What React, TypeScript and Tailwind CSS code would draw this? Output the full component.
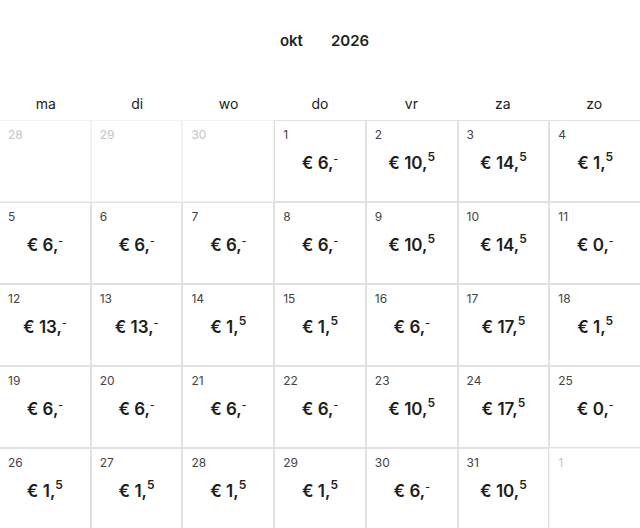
type Day = {
  day: number;
  euro?: number;
  cents?: string;
  muted?: boolean;
};

const weekdays = ['ma', 'di', 'wo', 'do', 'vr', 'za', 'zo'];

const days: Day[] = [
  { day: 28, muted: true },
  { day: 29, muted: true },
  { day: 30, muted: true },
  { day: 1, euro: 6, cents: '-' },
  { day: 2, euro: 10, cents: '5' },
  { day: 3, euro: 14, cents: '5' },
  { day: 4, euro: 1, cents: '5' },
  { day: 5, euro: 6, cents: '-' },
  { day: 6, euro: 6, cents: '-' },
  { day: 7, euro: 6, cents: '-' },
  { day: 8, euro: 6, cents: '-' },
  { day: 9, euro: 10, cents: '5' },
  { day: 10, euro: 14, cents: '5' },
  { day: 11, euro: 0, cents: '-' },
  { day: 12, euro: 13, cents: '-' },
  { day: 13, euro: 13, cents: '-' },
  { day: 14, euro: 1, cents: '5' },
  { day: 15, euro: 1, cents: '5' },
  { day: 16, euro: 6, cents: '-' },
  { day: 17, euro: 17, cents: '5' },
  { day: 18, euro: 1, cents: '5' },
  { day: 19, euro: 6, cents: '-' },
  { day: 20, euro: 6, cents: '-' },
  { day: 21, euro: 6, cents: '-' },
  { day: 22, euro: 6, cents: '-' },
  { day: 23, euro: 10, cents: '5' },
  { day: 24, euro: 17, cents: '5' },
  { day: 25, euro: 0, cents: '-' },
  { day: 26, euro: 1, cents: '5' },
  { day: 27, euro: 1, cents: '5' },
  { day: 28, euro: 1, cents: '5' },
  { day: 29, euro: 1, cents: '5' },
  { day: 30, euro: 6, cents: '-' },
  { day: 31, euro: 10, cents: '5' },
  { day: 1, muted: true },
];

function DayCell({ day, euro, cents, muted }: Day) {
  return (
    <div
      className={`flex h-[82px] flex-col border ${
        muted ? 'border-[#f1f1f1]' : 'border-[#e1e1e1]'
      }`}
    >
      <span
        className={`pl-2 pt-[6px] text-[12px] leading-4 ${
          muted ? 'text-[#c4c4c4]' : 'text-[#444]'
        }`}
      >
        {day}
      </span>
      {euro !== undefined && (
        <div className="flex flex-1 items-start justify-center pt-[8px]">
          <span className="text-[17px] font-semibold leading-6 text-[#1e1e1e]">
            € {euro},
          </span>
          <span
            className={`font-semibold text-[#1e1e1e] ${
              cents === '-' ? 'text-[10px] leading-4' : 'text-[12px] leading-3'
            }`}
          >
            {cents}
          </span>
        </div>
      )}
    </div>
  );
}

export default function App() {
  return (
    <div className="h-[528px] w-[640px] overflow-hidden bg-white font-['Inter',sans-serif] text-[#1e1e1e]">
      <div className="flex h-[82px] items-center justify-center gap-7 pl-[9px] text-[15px] font-semibold">
        <span>okt</span>
        <span>2026</span>
      </div>

      <div className="grid grid-cols-7 pb-[3px] pt-[9px] text-center text-[14px] leading-[26px] text-[#222]">
        {weekdays.map((w) => (
          <span key={w}>{w}</span>
        ))}
      </div>

      <div className="-mx-px grid grid-cols-7">
        {days.map((d, i) => (
          <DayCell key={i} {...d} />
        ))}
      </div>
    </div>
  );
}
